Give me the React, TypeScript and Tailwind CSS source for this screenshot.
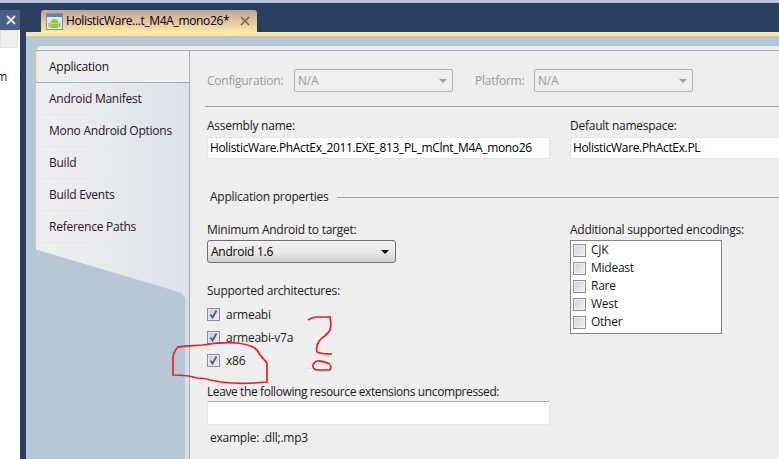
import React from "react";

const sideItems = ["Android Manifest", "Mono Android Options", "Build", "Build Events", "Reference Paths"];
const encodings = ["CJK", "Mideast", "Rare", "West", "Other"];
const architectures = ["armeabi", "armeabi-v7a", "x86"];

const CheckBox = ({ checked }: { checked?: boolean }) => (
  <span
    className={
      checked
        ? "flex h-[13px] w-[13px] shrink-0 items-center justify-center border border-[#8e8f8f] bg-gradient-to-br from-[#c4cbd6] to-[#eef0f4] shadow-[inset_0_0_0_1px_#e8e8e8]"
        : "flex h-[13px] w-[13px] shrink-0 items-center justify-center border border-[#8e8f8f] bg-gradient-to-br from-[#d0d0d0] to-[#f4f4f4] shadow-[inset_0_0_0_1px_#f2f2f2]"
    }
  >
    {checked && (
      <svg width="11" height="11" viewBox="0 0 11 11">
        <path d="M2.5 5.5 L4.5 8.5 L8.5 1.5" fill="none" stroke="#4a5f97" strokeWidth="1.8" />
      </svg>
    )}
  </span>
);

const DisabledSelect = ({ width }: { width: string }) => (
  <div className={`flex h-[23px] ${width} items-center justify-between rounded-[2px] border border-[#adb2b5] bg-[#f0f0f0] pl-[3px] pr-[5px] text-[#9a9a9a]`}>
    <span>N/A</span>
    <span className="h-0 w-0 border-x-[4px] border-t-[4px] border-x-transparent border-t-[#a0a0a0]" />
  </div>
);

const AndroidIcon = () => (
  <svg width="17" height="17" viewBox="0 0 17 17" className="shrink-0">
    <rect x="0.5" y="0.5" width="16" height="16" fill="#e3e8ee" stroke="#8a9199" />
    <rect x="1" y="1" width="15" height="3" fill="#4f86c6" />
    <path d="M4.5 10 a4 4 0 0 1 8 0 Z" fill="#9bc43c" />
    <rect x="4.5" y="10.5" width="8" height="4.5" fill="#9bc43c" />
    <rect x="2.5" y="10" width="1.5" height="4" fill="#9bc43c" />
    <rect x="13" y="10" width="1.5" height="4" fill="#9bc43c" />
  </svg>
);

export default function App() {
  return (
    <div className="relative flex h-[459px] w-[779px] flex-col overflow-hidden bg-[#2a3f60] font-['Open_Sans','Liberation_Sans',sans-serif] text-[12px] tracking-[-0.25px] text-[#1a1a1a]">
      <div className="h-[3px] bg-[#b7c3d6]" />
      <div className="flex min-h-0 flex-1">
        {/* neighbouring tool window */}
        <div className="flex w-[20px] shrink-0 flex-col pt-[7px]">
          <div className="flex h-[20px] items-center justify-end rounded-tr-[2px] bg-[#4b5f85] pr-[4px]">
            <svg width="10" height="10" viewBox="0 0 10 10">
              <path d="M1 1 L9 9 M9 1 L1 9" stroke="#dfe5ee" strokeWidth="2" />
            </svg>
          </div>
          <div className="flex-1 bg-white">
            <div className="h-[18px] w-[18px] border border-[#e2e2e2] bg-[#f0f0f0]" />
            <div className="mt-[20px] flex w-[7px] justify-end overflow-hidden">
              <span>m</span>
            </div>
          </div>
        </div>

        {/* document */}
        <div className="ml-[6px] flex min-w-0 flex-1 flex-col">
          <div className="flex h-[29px] pl-[15px] pt-[7px]">
            <div className="flex h-[22px] w-[216px] items-center gap-[3px] rounded-t-[3px] bg-gradient-to-b from-[#c3a395] to-[#ffe8a6] pl-[5px] pr-[7px] tracking-[-0.35px] text-black">
              <AndroidIcon />
              <span className="flex-1 whitespace-nowrap">HolisticWare...t_M4A_mono26*</span>
              <svg width="10" height="10" viewBox="0 0 10 10">
                <path d="M1 1 L9 9 M9 1 L1 9" stroke="#6f6350" strokeWidth="1.6" />
              </svg>
            </div>
          </div>
          <div className="h-[4px] bg-[#ffe8a6]" />
          <div className="flex min-h-0 flex-1 flex-col bg-[#b9c6d6] pl-[10px] pt-[10px]">
            <div className="flex min-h-0 flex-1 flex-col rounded-tl-[6px] bg-[#efefef]">
              <div className="h-[5px] border-b border-[#a3adbd]" />
              <div className="flex min-h-0 flex-1">
                {/* side tabs */}
                <div className="flex w-[153px] shrink-0 flex-col bg-[#b9c6d6]">
                  <div className="flex h-[31px] items-center rounded-bl-[3px] border-l-2 border-[#ffe8a6] bg-[#efefef] pl-[11px] text-[#1a1020]">
                    Application
                  </div>
                  <div className="border-t border-[#a3adbd] bg-gradient-to-r from-[#f0f0f0] to-[#dde2ea]">
                    {sideItems.map((item) => (
                      <div key={item} className="ml-[5px] mr-[16px] flex h-[32px] items-center border-b border-[#e4e6ec] pl-[8px] text-[#2a1030]">
                        {item}
                      </div>
                    ))}
                  </div>
                  <div className="h-[54px] bg-gradient-to-r from-[#f0f0f0] to-[#dde2ea] [clip-path:polygon(0_0,100%_0,100%_100%,97%_100%,95%_92%,0_12%)]" />
                  <div className="flex-1 border-r-[4px] border-[#d9dfe8]" />
                </div>

                {/* settings page */}
                <div className="flex min-w-0 flex-1 flex-col border-l border-[#a3adbd] pl-[17px]">
                  <div className="mt-[18px] flex h-[23px] items-center text-[#9a9a9a]">
                    <span className="w-[87px]">Configuration:</span>
                    <DisabledSelect width="w-[159px]" />
                    <span className="ml-[22px] w-[59px]">Platform:</span>
                    <DisabledSelect width="w-[159px]" />
                  </div>
                  <div className="-ml-[2px] mt-[14px] border-t border-[#a0a0a0]" />
                  <div className="mt-[11px] flex gap-[20px]">
                    <div className="w-[343px]">
                      <div className="h-[16px] leading-[16px]">Assembly name:</div>
                      <div className="mt-[3px] flex h-[22px] items-center rounded-[2px] border border-[#e3e6ea] bg-white pl-[2px] tracking-[-0.35px] text-black">
                        HolisticWare.PhActEx_2011.EXE_813_PL_mClnt_M4A_mono26
                      </div>
                    </div>
                    <div className="flex-1">
                      <div className="h-[16px] leading-[16px]">Default namespace:</div>
                      <div className="-mr-[4px] mt-[3px] flex h-[22px] items-center rounded-[2px] border border-[#e3e6ea] bg-white pl-[2px] tracking-[-0.35px] text-black">
                        HolisticWare.PhActEx.PL
                      </div>
                    </div>
                  </div>
                  <div className="mt-[30px] flex items-center gap-[9px] pl-[3px]">
                    <span className="h-[16px] leading-[16px]">Application properties</span>
                    <div className="flex-1 border-t border-[#a0a0a0]" />
                  </div>
                  <div className="mt-[17px] flex gap-[20px]">
                    <div className="w-[343px]">
                      <div className="h-[16px] leading-[16px]">Minimum Android to target:</div>
                      <div className="mt-[2px] flex h-[23px] w-[189px] items-center justify-between rounded-[3px] border border-[#707070] bg-gradient-to-b from-[#f2f2f2] via-[#ebebeb] to-[#cfcfcf] pl-[3px] pr-[6px] text-black">
                        <span>Android 1.6</span>
                        <span className="h-0 w-0 border-x-[4px] border-t-[4px] border-x-transparent border-t-black" />
                      </div>
                      <div className="mt-[20px] h-[16px] leading-[16px]">Supported architectures:</div>
                      <div className="mt-[9px] flex flex-col gap-[10px]">
                        {architectures.map((arch) => (
                          <label key={arch} className="flex h-[13px] items-center gap-[6px]">
                            <CheckBox checked />
                            <span>{arch}</span>
                          </label>
                        ))}
                      </div>
                      <div className="mt-[17px] h-[16px] whitespace-nowrap leading-[16px] tracking-[-0.4px]">Leave the following resource extensions uncompressed:</div>
                      <div className="mt-[1px] h-[24px] rounded-[2px] border border-[#e3e6ea] border-t-[#abadb3] bg-white" />
                      <div className="mt-[5px] pl-[3px] leading-[16px]">example: .dll;.mp3</div>
                    </div>
                    <div className="flex-1">
                      <div className="h-[16px] leading-[16px]">Additional supported encodings:</div>
                      <div className="mt-[2px] flex h-[94px] w-[152px] flex-col border border-[#82868c] bg-white pl-[2px]">
                        {encodings.map((enc) => (
                          <label key={enc} className="flex h-[18px] items-center gap-[5px]">
                            <CheckBox />
                            <span>{enc}</span>
                          </label>
                        ))}
                      </div>
                    </div>
                  </div>
                </div>
              </div>
            </div>
          </div>
        </div>
      </div>

      {/* red marker scribbles drawn over the screenshot */}
      <svg width="779" height="459" viewBox="0 0 779 459" className="pointer-events-none absolute left-0 top-0">
        <path
          d="M173 375 L173 357 C174 351 176 349 178 347 C188 345 195 346 203 345 C215 343 228 342 237 343 C246 344 253 346 257 350 C260 356 264 359 267 363 L267 382 C256 383 244 384 233 383 C224 383 216 381 210 380 C205 378 201 378 197 378 C188 375 180 375 173 375 Z"
          fill="none"
          stroke="#ee1c25"
          strokeWidth="1.7"
        />
        <path
          d="M308 320 C311 318 314 317 317 317 L330 317 C331 322 331 327 330 330 C328 334 323 337 320 340 C317 344 316 349 317 352 C321 354 327 354 332 354"
          fill="none"
          stroke="#ee1c25"
          strokeWidth="1.7"
        />
        <path
          d="M330 364 C325 362 320 360 317 361 C314 362 312 365 313 367 C314 370 316 370 318 370 L330 370 C331 368 331 366 330 365"
          fill="none"
          stroke="#ee1c25"
          strokeWidth="1.7"
        />
      </svg>
    </div>
  );
}
